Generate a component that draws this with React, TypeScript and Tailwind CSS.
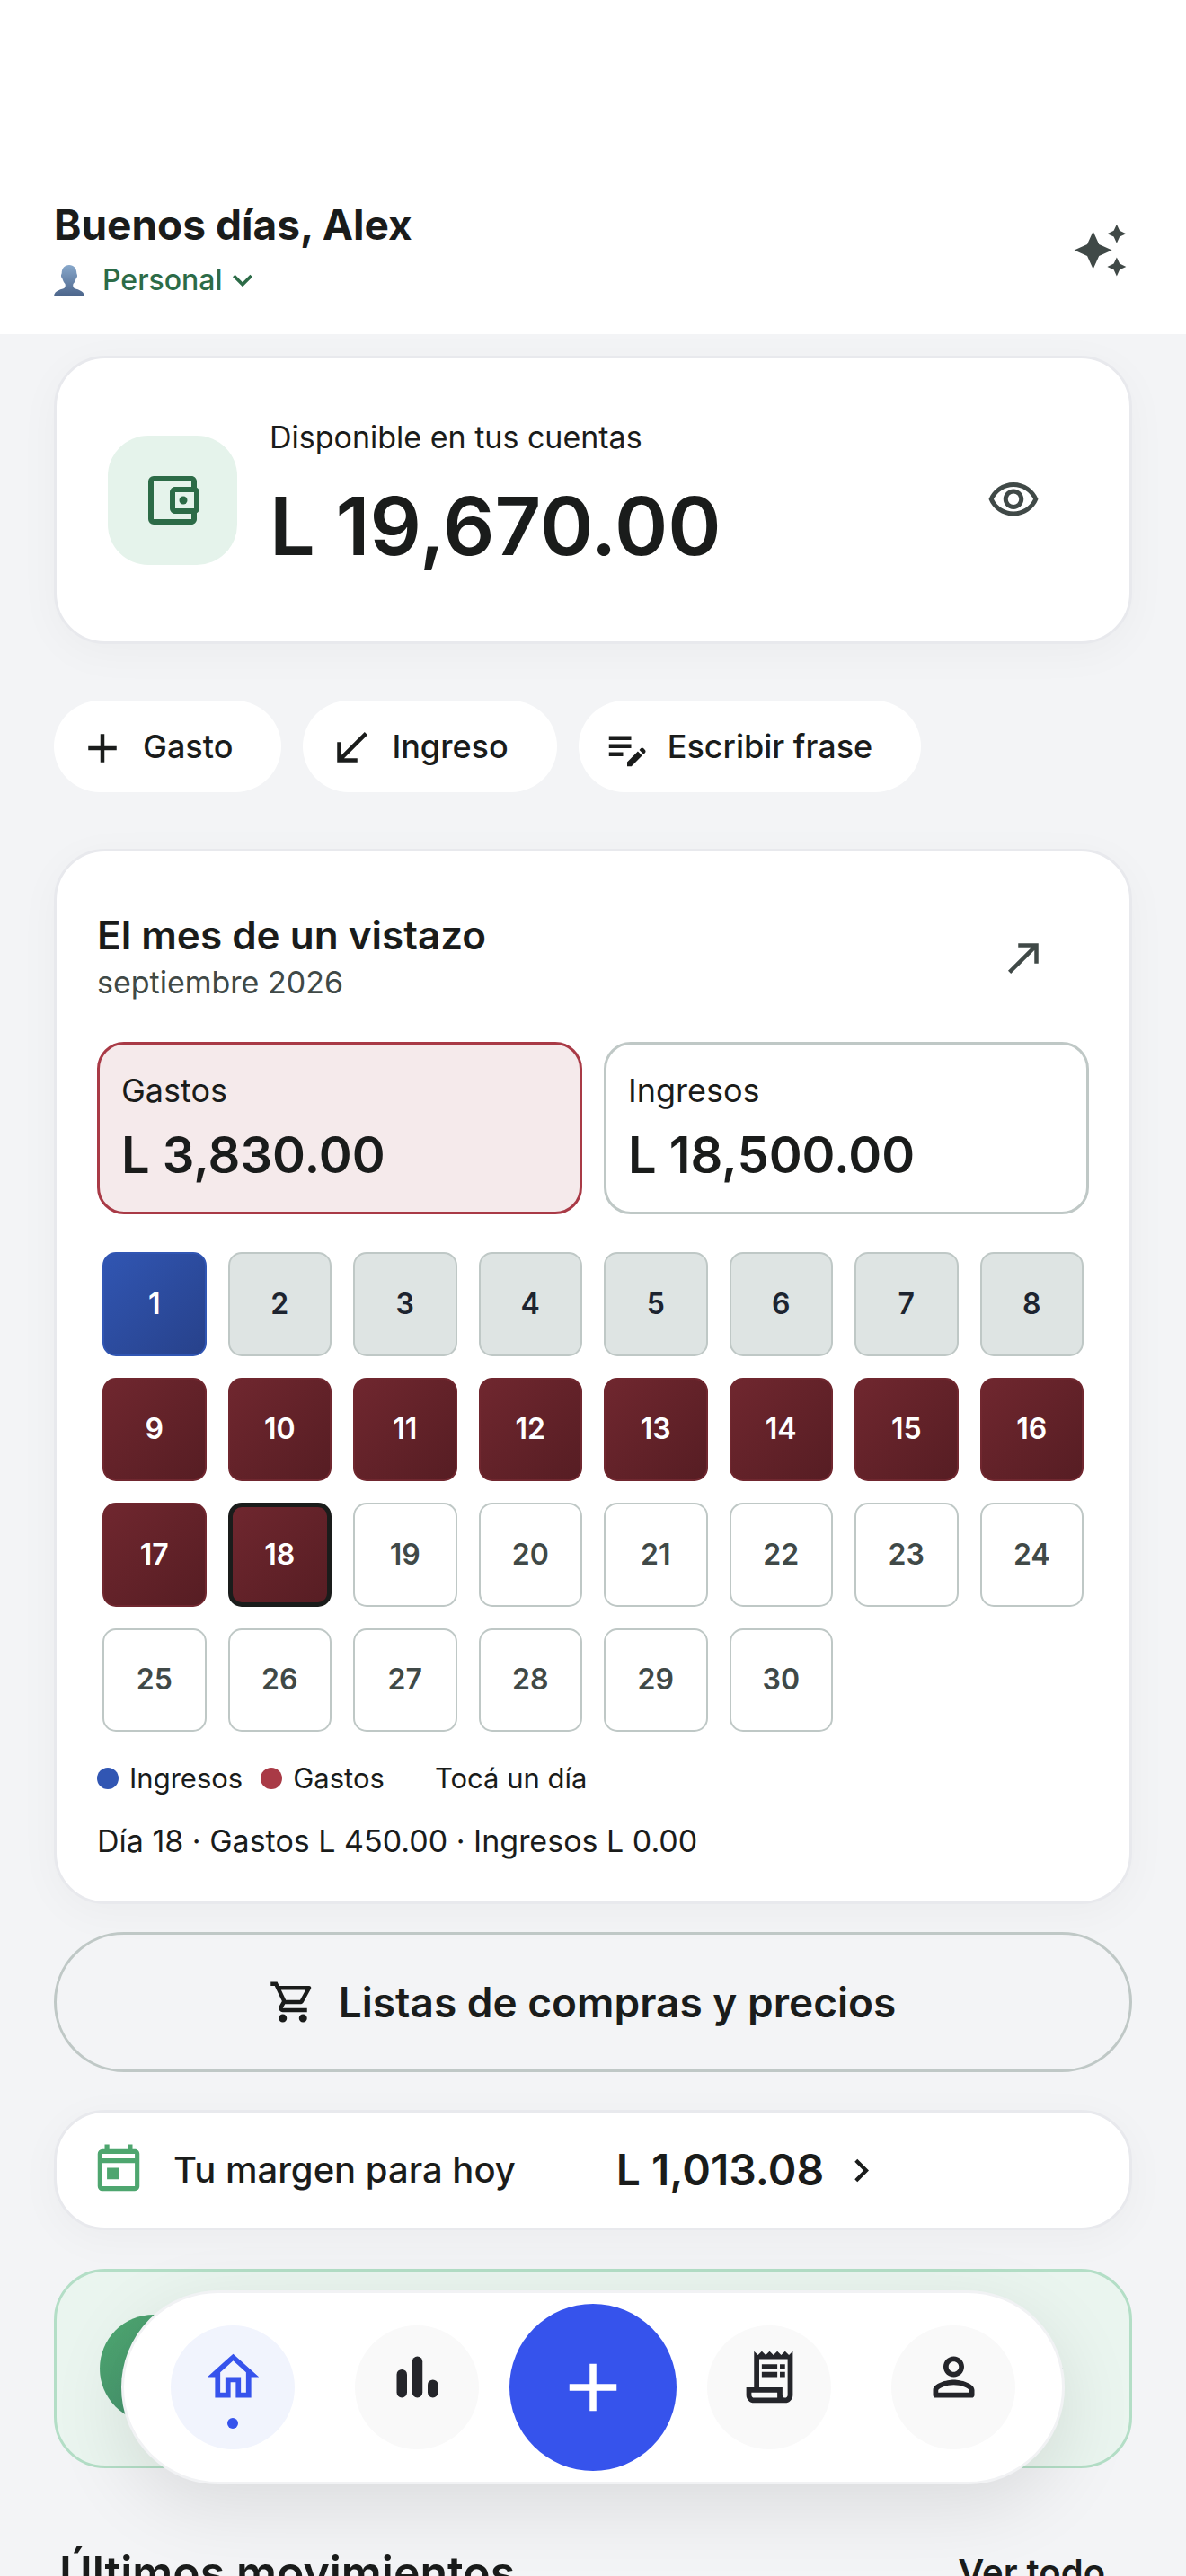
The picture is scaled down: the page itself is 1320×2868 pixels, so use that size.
import React from 'react';
import {
  MdAdd,
  MdAutoAwesome,
  MdChevronRight,
  MdEditNote,
  MdKeyboardArrowDown,
  MdNorthEast,
  MdOutlineAccountBalanceWallet,
  MdOutlineHome,
  MdOutlineReceiptLong,
  MdOutlineShoppingCart,
  MdOutlineToday,
  MdOutlineVisibility,
  MdSouthWest,
} from 'react-icons/md';

const CARD = 'rounded-[57px] border-[3px] border-[#e8e9ed] bg-white shadow-[0_10px_48px_rgba(20,24,40,0.035)]';

const SELECTED_DAY = 18;

function dayStyle(day: number) {
  if (day === 1) return 'border-2 border-[#3156b3] bg-linear-to-br from-[#3156b3] to-[#27418a] text-white';
  if (day <= 8) return 'border-2 border-[#bfc8c6] bg-[#dee4e3] text-[#1d2430]';
  if (day === SELECTED_DAY) return 'border-[5px] border-[#1a1c1b] bg-linear-to-br from-[#70272f] to-[#561d23] text-white';
  if (day <= 17) return 'border-2 border-[#70272f] bg-linear-to-br from-[#70272f] to-[#561d23] text-white';
  return 'border-2 border-[#bfc8c6] bg-white text-[#404947]';
}

function PersonGlyph() {
  return (
    <svg viewBox="0 0 34 35" className="h-[35px] w-[34px]" aria-hidden="true">
      <defs>
        <linearGradient id="person" x1="0" y1="0" x2="0" y2="1">
          <stop offset="0" stopColor="#88a8cb" />
          <stop offset="1" stopColor="#4b648a" />
        </linearGradient>
      </defs>
      <path
        fill="url(#person)"
        d="M17 0c5 0 8.200 3.600 8.300 9 .1 1.300.9 1.800.7 3.600-.2 1.500-1.200 1.800-1.600 3.100-.6 2.300-1.700 4-2.900 5.300-.5 1.700-.3 3.400.7 4.400 2.300 2 11.300 1.800 11.800 9.600H0c.5-7.800 9.500-7.600 11.800-9.600 1-1 1.200-2.700.7-4.400-1.200-1.300-2.300-3-2.900-5.300-.4-1.300-1.400-1.600-1.600-3.100-.2-1.800.6-2.300.7-3.600C8.800 3.600 12 0 17 0z"
      />
    </svg>
  );
}

function BarsIcon() {
  return (
    <svg viewBox="0 0 24 24" className="size-[69px]" fill="currentColor" aria-hidden="true">
      <rect x="4" y="9" width="4" height="11" rx="2" />
      <rect x="10" y="4" width="4" height="16" rx="2" />
      <rect x="16" y="13" width="4" height="7" rx="2" />
    </svg>
  );
}

function ProfileIcon() {
  return (
    <svg viewBox="0 0 24 24" className="size-[69px]" fill="currentColor" aria-hidden="true">
      <path d="M12 6c1.100 0 2 .9 2 2s-.9 2-2 2-2-.9-2-2 .9-2 2-2m0 9c2.700 0 5.800 1.290 6 2v1H6v-.99c.2-.72 3.300-2.010 6-2.010m0-11C9.790 4 8 5.790 8 8s1.790 4 4 4 4-1.790 4-4-1.790-4-4-4zm0 9c-2.670 0-8 1.340-8 4v2c0 .55.45 1 1 1h14c.55 0 1-.45 1-1v-2c0-2.660-5.330-4-8-4z" />
    </svg>
  );
}

function Header() {
  return (
    <header className="flex shrink-0 items-center justify-between bg-white px-[60px] pt-[220px] pb-9">
      <div className="flex flex-col gap-2">
        <h1 className="text-[46px] leading-[60px] font-bold">Buenos días, Alex</h1>
        <button type="button" className="flex h-12 items-center text-[32px] font-medium text-[#2c6b47]">
          <PersonGlyph />
          <span className="ml-5">Personal</span>
          <MdKeyboardArrowDown className="size-[44px]" />
        </button>
      </div>
      <button type="button" aria-label="Asistente" className="mr-1 text-[#404947]">
        <MdAutoAwesome className="size-[63px]" />
      </button>
    </header>
  );
}

function BalanceCard() {
  return (
    <section className={`flex items-center pt-[67px] pr-[75px] pb-[66px] pl-[57px] ${CARD}`}>
      <div className="flex size-36 items-center justify-center rounded-[45px] bg-[#e5f3eb] text-[#2c6b47]">
        <MdOutlineAccountBalanceWallet className="size-[72px]" />
      </div>
      <div className="ml-9 flex grow flex-col gap-4">
        <p className="text-[34px] leading-[42px]">Disponible en tus cuentas</p>
        <p className="text-[90px] leading-[124px] font-semibold">L 19,670.00</p>
      </div>
      <button type="button" aria-label="Ocultar saldo" className="flex size-[108px] items-center justify-center text-[#404947]">
        <MdOutlineVisibility className="size-[60px]" />
      </button>
    </section>
  );
}

function Chip({ icon, label }: { icon: React.ReactNode; label: string }) {
  return (
    <button type="button" className="flex h-[102px] items-center gap-[18px] rounded-full bg-white pr-[54px] pl-[27px] text-[36px] font-medium">
      {icon}
      {label}
    </button>
  );
}

function Total({ label, amount, className }: { label: string; amount: string; className: string }) {
  return (
    <button type="button" className={`flex flex-col gap-3 rounded-[30px] border-[3px] px-6 py-[27px] text-left ${className}`}>
      <span className="text-[36px] leading-[48px]">{label}</span>
      <span className="text-[56px] leading-[72px] font-semibold">{amount}</span>
    </button>
  );
}

function MonthCard() {
  const days = Array.from({ length: 30 }, (_, i) => i + 1);

  return (
    <section className={`mt-[63px] px-[45px] pt-[64px] pb-[43px] ${CARD}`}>
      <div className="flex items-center justify-between">
        <div className="flex flex-col gap-2">
          <h2 className="text-[44px] leading-[48px] font-semibold">El mes de un vistazo</h2>
          <p className="text-[34px] leading-[42px] text-[#404947]">septiembre 2026</p>
        </div>
        <button type="button" aria-label="Ver el mes" className="mr-[18px] flex size-[108px] items-center justify-center text-[#404947]">
          <MdNorthEast className="size-[54px]" />
        </button>
      </div>

      <div className="mt-10 grid grid-cols-2 gap-6">
        <Total label="Gastos" amount="L 3,830.00" className="border-[#a93a46] bg-[#f5eaeb]" />
        <Total label="Ingresos" amount="L 18,500.00" className="border-[#bfc8c6] bg-white" />
      </div>

      <div className="mt-[42px] grid grid-cols-8 gap-6 px-[6px]">
        {days.map((day) => (
          <button
            key={day}
            type="button"
            className={`flex aspect-square items-center justify-center rounded-[15px] bg-origin-border text-[32px] font-semibold ${dayStyle(day)}`}
          >
            {day}
          </button>
        ))}
      </div>

      <div className="mt-[34px] flex items-center text-[31px] leading-9">
        <span className="size-6 rounded-full bg-[#3156b3]"></span>
        <span className="ml-3">Ingresos</span>
        <span className="ml-5 size-6 rounded-full bg-[#a93a46]"></span>
        <span className="ml-3">Gastos</span>
        <span className="ml-14">Tocá un día</span>
      </div>
      <p className="mt-7 text-[34px] leading-[48px]">Día 18 · Gastos L 450.00 · Ingresos L 0.00</p>
    </section>
  );
}

function NavItem({ label, active, children }: { label: string; active?: boolean; children: React.ReactNode }) {
  return (
    <a
      href="#"
      aria-label={label}
      className={`flex size-[138px] flex-col items-center justify-center gap-[11px] rounded-full ${active ? 'bg-[#f1f4fd] text-[#3653ec]' : 'bg-[#f9f9f9] text-[#24252a]'}`}
    >
      {children}
      <span className={`size-3 rounded-full ${active ? 'bg-[#3653ec]' : 'bg-transparent'}`}></span>
    </a>
  );
}

function BottomNav() {
  return (
    <div className="fixed inset-x-0 bottom-[102px] flex justify-center">
      <nav className="flex h-[216px] items-center gap-[34px] rounded-full border-[3px] border-[#f1f2f4] bg-white px-[52px] shadow-[0_24px_84px_rgba(0,0,0,0.1)]">
        <div className="flex gap-[67px]">
          <NavItem label="Inicio" active>
            <MdOutlineHome className="size-[69px]" />
          </NavItem>
          <NavItem label="Estadísticas">
            <BarsIcon />
          </NavItem>
        </div>
        <button type="button" aria-label="Agregar" className="flex size-[186px] items-center justify-center rounded-full bg-[#3653ec] text-white">
          <MdAdd className="size-[90px]" />
        </button>
        <div className="flex gap-[67px]">
          <NavItem label="Movimientos">
            <MdOutlineReceiptLong className="size-[69px]" />
          </NavItem>
          <NavItem label="Perfil">
            <ProfileIcon />
          </NavItem>
        </div>
      </nav>
    </div>
  );
}

export default function App() {
  return (
    <div className="flex h-screen flex-col overflow-hidden bg-[#f3f4f6] font-['Inter',sans-serif] text-[#1a1c1b]">
      <Header />
      <main className="min-h-0 grow overflow-hidden px-[60px] pt-6">
        <BalanceCard />

        <div className="mt-[63px] flex gap-6">
          <Chip icon={<MdAdd className="mt-1 size-[54px]" />} label="Gasto" />
          <Chip icon={<MdSouthWest className="mt-1 size-[54px]" />} label="Ingreso" />
          <Chip icon={<MdEditNote className="mt-1 size-[54px]" />} label="Escribir frase" />
        </div>

        <MonthCard />

        <button type="button" className="mt-[31px] flex h-[156px] w-full items-center justify-center gap-6 rounded-full border-[3px] border-[#bfc8c6] pr-6 text-[46px] font-semibold">
          <MdOutlineShoppingCart className="size-[54px]" />
          Listas de compras y precios
        </button>

        <button type="button" className={`mt-[42px] flex h-[134px] w-full items-center pl-[38px] ${CARD}`}>
          <MdOutlineToday className="size-[62px] text-[#4ea66f]" />
          <span className="ml-[30px] text-[40px] font-medium">Tu margen para hoy</span>
          <span className="ml-28 text-[48px] font-semibold">L 1,013.08</span>
          <MdChevronRight className="ml-4 size-[51px]" />
        </button>

        <section className="mt-[43px] flex h-[222px] items-center justify-between rounded-[57px] border-[3px] border-[#b3dec6] bg-[#eaf5ef] px-12">
          <span className="size-[120px] rounded-full bg-linear-to-br from-[#4fa971] to-[#41876a]"></span>
          <MdChevronRight className="mr-2 size-[54px] text-[#1f5f45]" />
        </section>

        <div className="mt-[86px] flex items-center justify-between px-[6px]">
          <h2 className="text-[50px] leading-[60px] font-semibold">Últimos movimientos</h2>
          <a href="#" className="mr-6 text-[40px] leading-[60px] font-semibold">Ver todo</a>
        </div>
      </main>
      <BottomNav />
    </div>
  );
}
